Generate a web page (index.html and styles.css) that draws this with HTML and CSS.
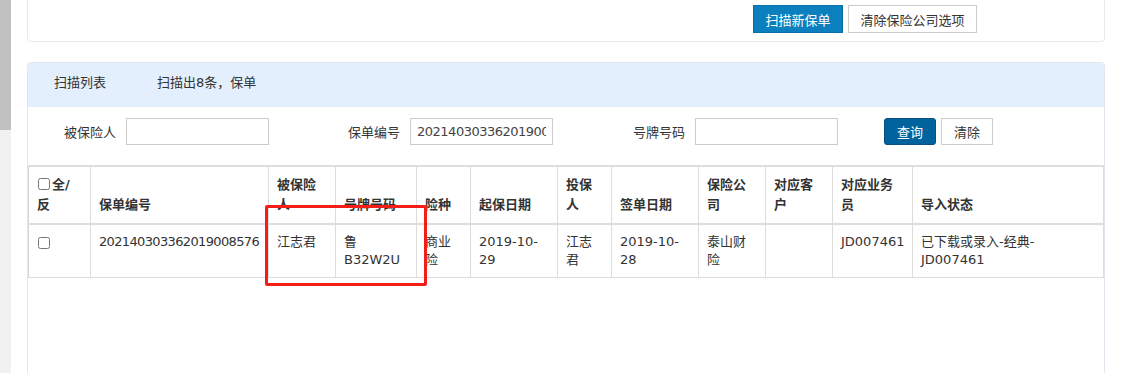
FILE: index.html
```html
<!DOCTYPE html>
<html lang="zh-CN">
<head>
    <meta charset="UTF-8">
    <meta name="viewport" content="width=device-width, initial-scale=1.0">
    <title>扫描保单</title>
    <link rel="stylesheet" href="styles.css">
</head>
<body>

<div class="frame">
    <div class="scrollbar"><div class="thumb"></div></div>

    <div class="main">
        <div class="top-card">
            <button class="btn btn-blue scan">扫描新保单</button>
            <button class="btn clear-company">清除保险公司选项</button>
        </div>

        <div class="panel">
            <div class="panel-head">
                <span>扫描列表</span><span class="count">扫描出8条，保单</span>
            </div>

            <div class="search">
                <label for="insured">被保险人</label>
                <input type="text" id="insured">
                <label for="policy" class="gap">保单编号</label>
                <input type="text" id="policy" value="202140303362019008576">
                <label for="plate" class="gap">号牌号码</label>
                <input type="text" id="plate">
                <button class="btn btn-dark query">查询</button>
                <button class="btn">清除</button>
            </div>

            <div class="table-wrap">
                <table class="list">
                    <colgroup>
                        <col style="width:62px">
                        <col style="width:178px">
                        <col style="width:67px">
                        <col style="width:81px">
                        <col style="width:54px">
                        <col style="width:87px">
                        <col style="width:54px">
                        <col style="width:87px">
                        <col style="width:67px">
                        <col style="width:67px">
                        <col style="width:80px">
                        <col style="width:191px">
                    </colgroup>
                    <thead>
                        <tr>
                            <th><input type="checkbox" class="check">全/反</th>
                            <th>保单编号</th>
                            <th>被保险人</th>
                            <th>号牌号码</th>
                            <th>险种</th>
                            <th>起保日期</th>
                            <th>投保人</th>
                            <th>签单日期</th>
                            <th>保险公司</th>
                            <th>对应客户</th>
                            <th>对应业务员</th>
                            <th>导入状态</th>
                        </tr>
                    </thead>
                    <tbody>
                        <tr>
                            <td><input type="checkbox" class="check"></td>
                            <td class="nowrap">202140303362019008576</td>
                            <td>江志君</td>
                            <td>鲁B32W2U</td>
                            <td>商业险</td>
                            <td>2019-10-29</td>
                            <td>江志君</td>
                            <td>2019-10-28</td>
                            <td>泰山财险</td>
                            <td></td>
                            <td>JD007461</td>
                            <td>已下载或录入-经典-JD007461</td>
                        </tr>
                    </tbody>
                </table>
                <div class="mark"></div>
            </div>
        </div>
    </div>
</div>

</body>
</html>
```

FILE: styles.css
```css
body {
    margin: 0;
    font-family: "DejaVu Sans", "Noto Sans CJK SC", sans-serif;
    font-size: 13px;
    color: #333;
    background-color: #fff;
}
.frame {
    display: flex;
    height: 373px;
    overflow: hidden;
}
.scrollbar {
    width: 11px;
    flex-shrink: 0;
    background-color: #f1f1f1;
}
.thumb {
    height: 130px;
    background-color: #c1c1c1;
}
.main {
    flex: 1;
    padding: 0 16px;
}
.top-card {
    display: flex;
    justify-content: flex-end;
    align-items: flex-start;
    gap: 5px;
    height: 42px;
    padding: 5px 127px 0 0;
    box-sizing: border-box;
    border: 1px solid #e6ebf1;
    border-top: none;
    border-radius: 0 0 4px 4px;
    margin-bottom: 20px;
}
.btn {
    height: 28px;
    padding: 0 11px;
    font-family: inherit;
    font-size: 13px;
    color: #333;
    background-color: #fff;
    border: 1px solid #ccc;
    cursor: pointer;
}
.btn.scan {
    width: 90px;
    padding: 0;
}
.btn.clear-company {
    width: 129px;
    padding: 0;
}
.btn-blue {
    color: #fff;
    background-color: #0c7fbe;
    border-color: #0a6ea6;
}
.btn-dark {
    color: #fff;
    background-color: #00639d;
    border-color: #0b4f7e;
    border-radius: 3px;
}
.panel {
    border: 1px solid #e1e7ee;
    border-radius: 4px;
    height: 400px;
}
.panel-head {
    height: 44px;
    line-height: 40px;
    padding: 0 26px;
    background-color: #e3effc;
    border-radius: 4px 4px 0 0;
}
.panel-head .count {
    margin-left: 51px;
}
.search {
    display: flex;
    align-items: center;
    margin-top: 11px;
    padding-left: 36px;
    height: 27px;
}
.search label {
    margin-right: 10px;
}
.search label.gap {
    margin-left: 79px;
}
.search label.gap:last-of-type {
    margin-left: 80px;
}
.search input {
    width: 143px;
    height: 27px;
    box-sizing: border-box;
    padding: 0 6px;
    border: 1px solid #ccc;
    font-family: inherit;
    font-size: 13px;
    color: #444;
    letter-spacing: -0.5px;
}
.search .btn {
    height: 27px;
    margin-right: 5px;
    padding: 0 12px;
}
.search .query {
    margin-left: 46px;
}
.table-wrap {
    position: relative;
    margin-top: 20px;
}
.list {
    table-layout: fixed;
    width: 1075px;
    border-collapse: collapse;
    border-top: 2px solid #ddd;
}
.list th,
.list td {
    border: 1px solid #ddd;
    padding: 8px;
    text-align: left;
}
.list th {
    line-height: 20px;
    vertical-align: bottom;
    font-weight: bold;
    border-top: none;
    border-bottom-width: 2px;
}
.list td {
    line-height: 18px;
    vertical-align: top;
}
.list td.nowrap {
    white-space: nowrap;
    letter-spacing: -0.65px;
}
.list th:first-child,
.list td:first-child {
    border-left-color: #d6d6d6;
}
.check {
    width: 12px;
    height: 12px;
    margin: 0 2px 0 1px;
    vertical-align: -1px;
}
.list td .check {
    margin-top: 4px;
}
.mark {
    position: absolute;
    left: 237px;
    top: 40px;
    width: 162px;
    height: 81px;
    box-sizing: border-box;
    border: 3px solid #f41e18;
    border-radius: 2px;
}
```
